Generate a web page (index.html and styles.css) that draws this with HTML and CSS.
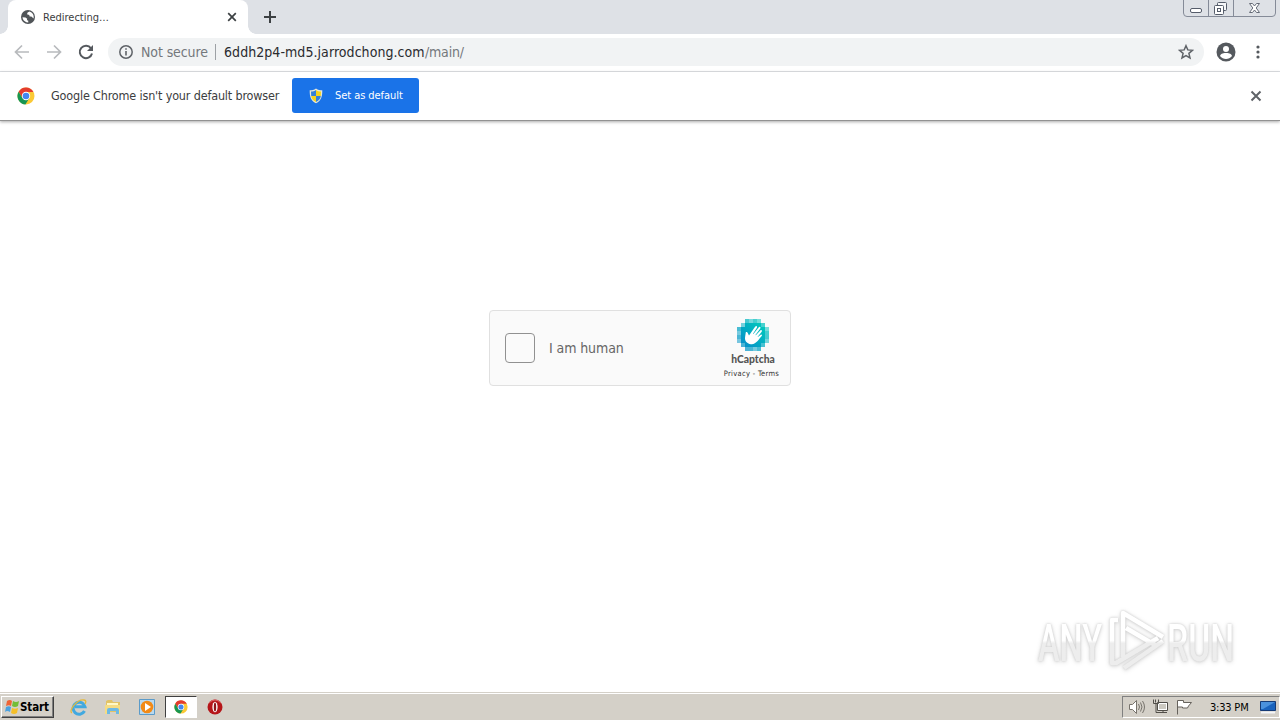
FILE: index.html
```html
<!DOCTYPE html>
<html lang="en">
<head>
<meta charset="utf-8">
<title>Redirecting…</title>
<link rel="stylesheet" href="styles.css">
</head>
<body>
<svg width="0" height="0" class="defs">
  <symbol id="chrome" viewBox="0 0 18 18">
    <circle cx="9" cy="9" r="8.5" fill="#fbc935"/>
    <path d="M1.6 4.7A8.5 8.5 0 0 1 16.4 4.9H9L5.4 11z" fill="#e33b2e"/>
    <path d="M1.6 4.7A8.5 8.5 0 0 0 8.4 17.5L12.4 11 9 13 5.4 11z" fill="#179652"/>
    <circle cx="9" cy="9" r="4.2" fill="#fff"/>
    <circle cx="9" cy="9" r="3.3" fill="#4386ef"/>
  </symbol>
</svg>
<div class="screen">
  <header class="tabstrip">
    <div class="tab">
      <svg class="globe" width="14" height="14" viewBox="0 0 14 14"><circle cx="7" cy="7" r="7" fill="#505458"/><path d="M1.5 7.2l3 .2 1.7 1.3-.3 1.5 1.3.3.1 2-1.9-.3C3 11.2 1.6 9.4 1.5 7.2zM8.5 1.6L6.6 2.5 6 4.2l2.2.8.5 1.4 1.6.2 2.3 2C13.2 5 11.5 2.5 8.5 1.6z" fill="#fff"/></svg>
      <span class="tab-title">Redirecting…</span>
      <svg class="tab-close" width="10" height="10" viewBox="0 0 10 10"><path d="M1.2 1.2l7.6 7.6M8.8 1.2L1.2 8.8" stroke="#3c4043" stroke-width="1.7"/></svg>
    </div>
    <svg class="new-tab" width="12" height="12" viewBox="0 0 12 12"><path d="M6 0v12M0 6h12" stroke="#3c4043" stroke-width="2"/></svg>
    <svg class="window-controls" width="94" height="18" viewBox="0 0 94 18">
      <path d="M.5 0v13q0 3.5 3.5 3.5h85q3.5 0 3.5-3.5V0M25.5 0v16M50.5 0v16" fill="none" stroke="#858b98"/>
      <rect x="7.5" y="8.5" width="11" height="4" rx="1.5" fill="#fff" stroke="#555c6a"/>
      <rect x="34.5" y="2.5" width="9" height="8" rx="1" fill="#f5f6f8" stroke="#555c6a"/><rect x="31.5" y="5.5" width="9" height="9" rx="1" fill="#fff" stroke="#555c6a"/><rect x="34.5" y="8.5" width="3" height="3" fill="#fff" stroke="#555c6a"/>
      <path d="M66.5 3.5h3l2 2.5 2-2.5h3L73.200 8l3.300 4.500h-3l-2-2.500-2 2.500h-3L69.800 8z" fill="#fff" stroke="#656b77"/>
    </svg>
  </header>

  <nav class="toolbar">
    <svg class="back" width="16" height="16" viewBox="0 0 16 16"><path d="M15 8H2M8 1.5L1.5 8 8 14.5" fill="none" stroke="#b8babd" stroke-width="1.7"/></svg>
    <svg class="forward" width="16" height="16" viewBox="0 0 16 16"><path d="M1 8h13M8 1.5L14.5 8 8 14.5" fill="none" stroke="#b8babd" stroke-width="1.7"/></svg>
    <svg class="reload" width="16" height="16" viewBox="0 0 16 16"><path d="M13 4.3A6.2 6.2 0 1 0 14 9.5" fill="none" stroke="#55595e" stroke-width="2"/><path d="M15 1v6H9z" fill="#55595e"/></svg>
    <div class="address">
      <svg width="14" height="14" viewBox="0 0 14 14"><circle cx="7" cy="7" r="6.2" fill="none" stroke="#5f6368" stroke-width="1.5"/><path d="M7 6v4.5M7 3.3v1.5" stroke="#5f6368" stroke-width="1.6"/></svg>
      <span class="security">Not secure</span>
      <i class="divider"></i>
      <span class="host">6ddh2p4-md5.jarrodchong.com</span><span class="path">/main/</span>
      <svg class="star" width="16" height="16" viewBox="0 0 16 16"><path d="M8 1.7l1.8 4.2 4.7.4-3.6 3 1.1 4.6L8 11.5l-4 2.4 1.1-4.6-3.6-3 4.7-.4z" fill="none" stroke="#5f6368" stroke-width="1.5"/></svg>
    </div>
    <svg class="profile" width="20" height="20" viewBox="0 0 20 20"><circle cx="10" cy="10" r="9.5" fill="#55595e"/><circle cx="10" cy="7" r="3" fill="#fff"/><path d="M4 14c1-2.8 4-3 6-3s5 .2 6 3c-3 4-9 4-12 0z" fill="#fff"/></svg>
    <svg class="more" width="4" height="14" viewBox="0 0 4 14" fill="#55595e"><circle cx="2" cy="2" r="1.6"/><circle cx="2" cy="7" r="1.6"/><circle cx="2" cy="12" r="1.6"/></svg>
  </nav>

  <section class="infobar">
    <svg width="18" height="18"><use href="#chrome"/></svg>
    <span class="info-text">Google Chrome isn't your default browser</span>
    <button class="default-button">
      <svg width="14" height="16" viewBox="0 0 14 16"><path d="M7 .5C5 2 3 2.3.7 2.3c0 6 .8 10.2 6.3 13 5.5-2.8 6.3-7 6.3-13C11 2.3 9 2 7 .5z" fill="#e7e8d9"/><path d="M7 2C5.500 3 4 3.500 2 3.600L2.200 8H7z" fill="#3480d8"/><path d="M7 2c1.500 1 3 1.500 5 1.600L11.800 8H7z" fill="#f5d21c"/><path d="M2.200 8H7v6C4 12.500 2.600 10.800 2.200 8z" fill="#f5d21c"/><path d="M11.800 8H7v6c3-1.500 4.400-3.200 4.800-6z" fill="#3480d8"/></svg>
      <span>Set as default</span>
    </button>
    <svg class="info-close" width="12" height="12" viewBox="0 0 12 12"><path d="M1.5 1.5l9 9M10.5 1.5l-9 9" stroke="#5f6368" stroke-width="2"/></svg>
  </section>

  <main class="page">
    <div class="captcha">
      <span class="checkbox"></span>
      <span class="human">I am human</span>
      <div class="brand">
        <svg width="32" height="32" viewBox="0 0 32 32">
          <defs><linearGradient id="teal" x1="1" y1="0" x2="0" y2="1"><stop stop-color="#00cdbb"/><stop offset="1" stop-color="#078bca"/></linearGradient></defs>
          <path d="M8 0h16v4h4v4h4v16h-4v4h-4v4H8v-4H4v-4H0V8h4V4h4z" fill="url(#teal)" opacity=".72"/>
          <path d="M8 4h16v4h4v16h-4v4H8v-4H4V8h4z" fill="url(#teal)"/>
          <path d="M12 0h4v4h-4zM20 0h4v4h-4zM4 4h4v4H4zM0 12h4v4H0zM28 8h4v4h-4zM28 20h4v4h-4zM0 20h4v4H0zM16 28h4v4h-4z" fill="#fff" opacity=".25"/>
          <path d="M9.3 13.5c1-.7 1.8.2 2.1 1l1.1 2.3 6.1-8.7c1.2-1.5 2.5-.4 1.8.9l-3.9 6 .4.3 5.2-6.6c1.2-1.3 2.4-.2 1.7 1l-4.9 6.7.4.2 4.5-4.8c1.2-1 2.1.1 1.4 1.2l-4.2 5.2.3.2 2.7-2.2c1.1-.8 2 .2 1.2 1.2-3 3.2-5.6 8.7-10.7 8.1-4.5-.5-6.500-3.800-5.900-7.200z" transform="translate(-.5 -.3)" fill="#fff"/>
        </svg>
        <strong>hCaptcha</strong>
        <small>Privacy - Terms</small>
      </div>
    </div>
    <svg class="watermark" width="204" height="72" viewBox="0 0 204 72">
      <defs><linearGradient id="mark" gradientUnits="userSpaceOnUse" x1="0" y1="0" x2="0" y2="72"><stop offset=".52" stop-color="#fff"/><stop offset=".56" stop-color="#ededed"/></linearGradient></defs>
      <g class="mark-shadow">
        <text class="mark-text" x="4" y="58" textLength="64" lengthAdjust="spacingAndGlyphs" fill="url(#mark)">ANY</text>
        <text class="mark-text" x="133" y="58" textLength="67" lengthAdjust="spacingAndGlyphs" fill="url(#mark)">RUN</text>
        <path fill="none" stroke="url(#mark)" stroke-width="4.5" stroke-linejoin="round" d="M89 54V10l40 24M92 25l29 17M129 38L90 65M124 35L82 60h-4V17h6"/>
      </g>
    </svg>
  </main>

  <footer class="taskbar">
    <div class="start"><svg width="16" height="16" viewBox="0 0 16 16"><path d="M3 2q3-2 5 0L7 7q-2-1.5-5 0z" fill="#ef6435"/><path d="M9 2q3 2 6 0l-1 5q-3 2-6 0z" fill="#73bd38"/><path d="M2 8q3-1.5 5 0l-1 5q-3-2-5 0z" fill="#4aa1df"/><path d="M8 9q3 1.5 6 0l-1 5q-3 2-6 0z" fill="#f5bf28"/></svg><b>Start</b></div>
    <svg class="explorer" width="18" height="18" viewBox="0 0 18 18"><path d="M14.5 13A6 6 0 1 1 15 8.8H5" fill="none" stroke="#42a9df" stroke-width="3"/><path d="M2 15C-2 13 7 1 14 2q3 .5 1 4" fill="none" stroke="#e4b93c" stroke-width="1.3"/></svg>
    <svg class="folder" width="18" height="18" viewBox="0 0 18 18"><path d="M2 3l2-1h4l1 2h7v10H2z" fill="#e2c365"/><path d="M3 5h11v5H3z" fill="#fff8c6"/><path d="M1 7h15v9h-3v-4H5v4H1z" fill="#f5dc84"/><path d="M3 16v-4q0-2 2-2h8q2 0 2 2v4h-3v-3H6v3z" fill="#6db9e4"/></svg>
    <svg class="media" width="16" height="16" viewBox="0 0 16 16"><path d="M.5.5h15v15H.5z" fill="#b9d9ef" stroke="#5b9bc9"/><circle cx="8" cy="8" r="6.3" fill="#f28a16"/><path d="M6 4l6 4-6 4z" fill="#fff"/></svg>
    <div class="active-app"><svg width="14" height="14"><use href="#chrome"/></svg></div>
    <svg class="opera" width="16" height="16" viewBox="0 0 16 16"><circle cx="8" cy="8" r="7.5" fill="#b51519"/><path d="M2 4q6-6 12 0" fill="none" stroke="#df6868"/><ellipse cx="8" cy="8" rx="2.6" ry="5.3" fill="#fff"/><ellipse cx="8" cy="8" rx="1.2" ry="4.5" fill="#8d1519"/></svg>
    <div class="tray">
      <svg width="18" height="16" viewBox="0 0 18 16" fill="none" stroke="#77736c"><path d="M1.5 5.5h3l4-4v13l-4-4h-3z" fill="#fff"/><path d="M10.5 5q2 3 0 6M12.5 3.5q3 4.5 0 9M14.5 2q4 6 0 12"/></svg>
      <svg class="network" width="17" height="16" viewBox="0 0 17 16" fill="#fff" stroke="#514e49"><path d="M5.5 3.5h10v8h-10zM8 13.5h7M11 11.5v2"/><path d="M1.5.5v4h5v-4M3.5.5v3M4 4.5v9h4" fill="none"/><path d="M7 5h7v5H7z" fill="#ccc9c1" stroke="none"/></svg>
      <svg class="flag" width="17" height="16" viewBox="0 0 17 16"><path d="M1.5 15.5V1.5h6v2h8l-3 3.5-1 2h-5v-1h-5" fill="#fff" stroke="#66625c"/></svg>
      <time>3:33 PM</time>
      <svg class="desktop" width="16" height="14" viewBox="0 0 16 14"><path d="M.5 1.5h15v9H.5z" fill="#1963bd" stroke="#153b76"/><path d="M1 2h14L3 9H1z" fill="#4a91dc"/><path d="M1 12.5h14" stroke="#f3f5f8" stroke-width="2"/></svg>
    </div>
  </footer>
</div>
</body>
</html>
```
FILE: styles.css
```css
* { box-sizing: border-box; }
body { margin: 0; font-family: "DejaVu Sans Condensed", "DejaVu Sans", "Noto Sans", sans-serif; color: #3c3d40; }
svg { display: block; flex: none; }
.defs { position: absolute; }
.screen { width: 1280px; height: 720px; overflow: hidden; display: flex; flex-direction: column; background: #fff; }
.screen span, .screen time { white-space: nowrap; }
.tabstrip { height: 34px; flex: none; background: #dee1e6; display: flex; }
.tabstrip::before { content: ""; width: 8px; background: radial-gradient(circle at 0 0, #dee1e6 7.5px, #fff 8px) bottom / 8px 8px no-repeat; }
.tab { width: 240px; height: 34px; display: flex; align-items: center; padding: 0 11px 0 13px; background: #fff; border-radius: 8px 8px 0 0; }
.tab::after { content: ""; width: 8px; height: 8px; align-self: flex-end; margin-right: -19px; margin-left: 11px; background: radial-gradient(circle at 8px 0, #dee1e6 7.5px, #fff 8px); }
.tab-title { margin-left: 8px; font-size: 11px; }
.tab-close { margin-left: auto; }
.new-tab { margin: 11px 0 0 16px; }
.window-controls { margin: 0 3px 0 auto; }
.toolbar { height: 38px; flex: none; display: flex; align-items: center; padding: 0 20px 2px 14px; border-bottom: 1px solid #dcdfe3; }
.forward { margin-left: 16px; }
.reload { margin-left: 16px; }
.address { height: 28px; width: 1096px; margin-left: 14px; padding: 0 10px 0 11px; border-radius: 14px; background: #f1f3f4; display: flex; align-items: center; font-size: 14px; }
.security { width: 67px; margin-left: 8px; color: #74787c; letter-spacing: -.1px; }
.divider { width: 1px; height: 16px; background: #9da1a5; margin: 0 8px 0 7px; }
.host { width: 201px; color: #2a2b2f; letter-spacing: .06px; }
.path { color: #74787c; letter-spacing: -.2px; }
.star { margin-left: auto; }
.profile { margin-left: 12px; }
.more { margin-left: auto; }
.infobar { height: 49px; flex: none; display: flex; align-items: center; padding: 0 18px 1px 17px; border-bottom: 1px solid #929292; position: relative; z-index: 1; background: #fff; box-shadow: 0 1px 3px #aaa; }
.info-text { margin-left: 16px; width: 229px; font-size: 12.5px; letter-spacing: -.17px; }
.default-button { width: 127px; height: 35px; margin-left: 12px; display: flex; align-items: center; padding: 0 16px 0 17px; border: 0; border-radius: 3px; background: #1a73e8; color: #fff; font: 11px "DejaVu Sans Condensed", sans-serif; }
.default-button span { margin-left: 12px; letter-spacing: -.06px; }
.info-close { margin-left: auto; }
.page { flex: 1; position: relative; padding-top: 189px; }
.captcha { width: 302px; height: 76px; margin: 0 auto; border: 1px solid #e0e0e0; border-radius: 4px; background: #fafafa; display: flex; align-items: center; padding: 0 6px 0 15px; }
.checkbox { width: 30px; height: 30px; border: 1px solid #919191; border-radius: 4px; }
.human { margin-left: 14px; font-size: 14px; color: #666; letter-spacing: -.1px; }
.brand { width: 62px; height: 60px; margin-left: auto; padding-top: 1px; display: flex; flex-direction: column; align-items: center; }
.brand strong { font: 900 10.3px/12px Lato, sans-serif; color: #555; margin-top: 2px; }
.brand small { font-size: 7.5px; line-height: 10px; margin: 4px 3px 0 0; color: #333; white-space: nowrap; letter-spacing: .3px; }
.watermark { position: absolute; right: 42px; bottom: 17px; }
.mark-shadow { filter: drop-shadow(0 0 1px #ccc) drop-shadow(0 1px 2px #ddd); }
.mark-text { font: 500 51px Roboto, sans-serif; }
.taskbar { height: 28px; flex: none; background: #d4d0c8; border-top: 1px solid #d4d0c8; box-shadow: inset 0 1px #fff; display: flex; align-items: center; padding: 1px 0 0 1px; }
.start { width: 53px; height: 22px; display: flex; align-items: center; padding-left: 2px; border: 1px solid; border-color: #fff #404040 #404040 #fff; box-shadow: inset -1px -1px #808080; }
.start b { font: bold 11.5px "DejaVu Sans Condensed", sans-serif; color: #000; letter-spacing: -.1px; }
.explorer { margin-left: 16px; }
.folder { margin-left: 16px; }
.media { margin-left: 17px; }
.active-app { width: 32px; height: 22px; margin-left: 10px; display: flex; align-items: center; justify-content: center; background: #fff; border: 1px solid; border-color: #404040 #fff #fff #404040; }
.opera { margin-left: 10px; }
.tray { width: 158px; height: 22px; margin-left: auto; display: flex; align-items: center; padding: 0 3px 0 5px; border: 1px solid; border-color: #808080 #fff #fff #808080; }
.network { margin-left: 6px; }
.flag { margin-left: 7px; }
.tray time { width: 41px; margin-left: 17px; font-size: 11px; color: #000; letter-spacing: -.2px; }
.desktop { margin-left: auto; }
```
